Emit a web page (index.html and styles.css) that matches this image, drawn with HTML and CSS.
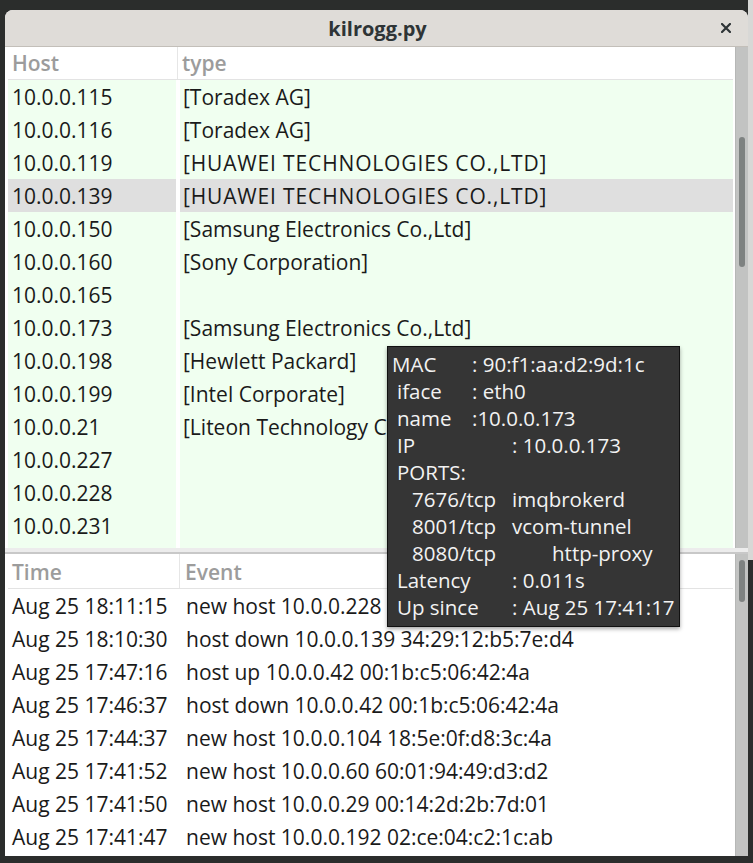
FILE: index.html
```html
<!DOCTYPE html>
<html>
<head>
<meta charset="utf-8">
<link rel="stylesheet" href="styles.css">
</head>
<body>
<div class="desk">
  <div class="window">
    <div class="titlebar">
      <span class="title">kilrogg.py</span>
      <svg class="close" width="10" height="10" viewBox="0 0 10 10"><path d="M1 1 L9 9 M9 1 L1 9" stroke="#2e3436" stroke-width="2.2" stroke-linecap="square"/></svg>
    </div>
    <div class="pane top">
      <div class="tree">
        <div class="head hosts">
          <div class="hc">Host</div>
          <div class="hc">type</div>
        </div>
        <div class="rows hosts">
          <div class="c">10.0.0.115</div><div class="c">[Toradex AG]</div>
          <div class="c">10.0.0.116</div><div class="c">[Toradex AG]</div>
          <div class="c">10.0.0.119</div><div class="c caps">[HUAWEI TECHNOLOGIES CO.,LTD]</div>
          <div class="c sel">10.0.0.139</div><div class="c sel caps">[HUAWEI TECHNOLOGIES CO.,LTD]</div>
          <div class="c">10.0.0.150</div><div class="c">[Samsung Electronics Co.,Ltd]</div>
          <div class="c">10.0.0.160</div><div class="c">[Sony Corporation]</div>
          <div class="c">10.0.0.165</div><div class="c"></div>
          <div class="c">10.0.0.173</div><div class="c">[Samsung Electronics Co.,Ltd]</div>
          <div class="c">10.0.0.198</div><div class="c">[Hewlett Packard]</div>
          <div class="c">10.0.0.199</div><div class="c">[Intel Corporate]</div>
          <div class="c">10.0.0.21</div><div class="c">[Liteon Technology Corporation]</div>
          <div class="c">10.0.0.227</div><div class="c"></div>
          <div class="c">10.0.0.228</div><div class="c"></div>
          <div class="c">10.0.0.231</div><div class="c"></div>
          <div class="c"></div><div class="c"></div>
        </div>
      </div>
      <div class="trough"><div class="slider s1"></div></div>
    </div>
    <div class="handle"></div>
    <div class="pane bottom">
      <div class="tree">
        <div class="head events">
          <div class="hc">Time</div>
          <div class="hc">Event</div>
        </div>
        <div class="rows events">
          <div class="c">Aug 25 18:11:15</div><div class="c">new host 10.0.0.228 00:1e:c0:0a:b1:3f</div>
          <div class="c">Aug 25 18:10:30</div><div class="c">host down 10.0.0.139 34:29:12:b5:7e:d4</div>
          <div class="c">Aug 25 17:47:16</div><div class="c">host up 10.0.0.42 00:1b:c5:06:42:4a</div>
          <div class="c">Aug 25 17:46:37</div><div class="c">host down 10.0.0.42 00:1b:c5:06:42:4a</div>
          <div class="c">Aug 25 17:44:37</div><div class="c">new host 10.0.0.104 18:5e:0f:d8:3c:4a</div>
          <div class="c">Aug 25 17:41:52</div><div class="c">new host 10.0.0.60 60:01:94:49:d3:d2</div>
          <div class="c">Aug 25 17:41:50</div><div class="c">new host 10.0.0.29 00:14:2d:2b:7d:01</div>
          <div class="c">Aug 25 17:41:47</div><div class="c">new host 10.0.0.192 02:ce:04:c2:1c:ab</div>
        </div>
      </div>
      <div class="trough"><div class="slider s2"></div></div>
    </div>
    <div class="tooltip">
      <div class="tl"><span class="k k0">MAC</span><span>: 90:f1:aa:d2:9d:1c</span></div>
      <div class="tl"><span class="k k1">iface</span><span>: eth0</span></div>
      <div class="tl"><span class="k k1">name</span><span>:10.0.0.173</span></div>
      <div class="tl"><span class="k k2">IP</span><span>: 10.0.0.173</span></div>
      <div class="tl"><span class="k">PORTS:</span></div>
      <div class="tl port"><span class="k k3">7676/tcp</span><span>imqbrokerd</span></div>
      <div class="tl port"><span class="k k3">8001/tcp</span><span>vcom-tunnel</span></div>
      <div class="tl port"><span class="k k4">8080/tcp</span><span>http-proxy</span></div>
      <div class="tl"><span class="k k2">Latency</span><span>: 0.011s</span></div>
      <div class="tl"><span class="k k2">Up since</span><span>: Aug 25 17:41:17</span></div>
    </div>
  </div>
</div>
</body>
</html>
```

FILE: styles.css
```css
html, body {
  margin: 0;
  padding: 0;
}
body {
  width: 753px;
  height: 863px;
  overflow: hidden;
  background: #2b2d2c;
  font-family: "Open Sans", "Noto Sans", sans-serif;
  font-size: 21px;
  color: #1a1a1a;
}
.desk {
  padding: 10px 5px 0 5px;
  background: linear-gradient(to right, transparent 748px, #d8d8d6 748px) no-repeat 0 0 / 753px 560px;
}
.window {
  position: relative;
  width: 743px;
  height: 846px;
  background: #ffffff;
  border-radius: 8px 8px 0 0;
  overflow: hidden;
  display: flex;
  flex-direction: column;
}
.titlebar {
  height: 36px;
  flex: none;
  background: #dfdcd8;
  border-bottom: 1px solid #c3bfb9;
  display: flex;
  align-items: center;
  justify-content: center;
  position: relative;
}
.title {
  font-weight: 700;
  font-size: 20px;
  color: #2e3436;
  margin-left: 2px;
}
.close {
  position: absolute;
  right: 17px;
  top: 13px;
}
.pane {
  display: flex;
  flex: none;
}
.pane.top {
  height: 501px;
}
.pane.bottom {
  height: 302px;
}
.tree {
  flex: 1;
  padding-left: 3px;
  overflow: hidden;
  margin-right: 2px;
}
.head {
  display: grid;
  border-bottom: 1px solid #e3e3e3;
  background: #fff;
}
.head.hosts {
  height: 32px;
  grid-template-columns: 169px 1fr;
}
.head.events {
  height: 34px;
  grid-template-columns: 171px 1fr;
}
.hc {
  font-weight: 600;
  font-size: 21px;
  color: #9c9c9c;
  display: flex;
  align-items: center;
  padding-left: 4px;
  border-left: 1px solid #e6e6e6;
}
.hc:first-child {
  border-left: none;
  padding-left: 4px;
}
.head.hosts .hc:nth-child(2) { padding-left: 4px; }
.head.events .hc:nth-child(2) { padding-left: 5px; padding-top: 1px; }
.head.events .hc:first-child { padding-top: 1px; }
.rows {
  display: grid;
  grid-auto-rows: 33px;
}
.rows.hosts {
  grid-template-columns: 168px 553px;
  column-gap: 4px;
}
.rows.hosts .c {
  background: #f0fff0;
}
.rows.hosts .c.sel {
  background: #dfdfdf;
}
.rows.events {
  grid-template-columns: 174px 1fr;
}
.c {
  display: flex;
  align-items: center;
  padding-left: 4px;
  white-space: nowrap;
  overflow: hidden;
}
.c.caps {
  letter-spacing: 0.85px;
}
.rows.hosts .c:nth-child(2n) { padding-left: 3px; }
.rows.events .c:nth-child(2n) { padding-left: 4px; }
.trough {
  width: 13px;
  flex: none;
  background: #c2c3c2;
  border-left: 1px solid #b6b7b6;
  box-sizing: border-box;
  position: relative;
}
.slider {
  position: absolute;
  left: 3px;
  width: 6px;
  border-radius: 3px;
  background: #7e8281;
}
.s1 { top: 90px; height: 130px; }
.s2 { top: 6px; height: 42px; }
.handle {
  height: 6px;
  flex: none;
  background: #ececec;
  border-bottom: 2px solid #c8c8c8;
  box-sizing: border-box;
}
.tooltip {
  position: absolute;
  left: 382px;
  top: 336px;
  width: 291px;
  height: 275px;
  background: #353535;
  border: 1px solid #111;
  box-shadow: 0 2px 4px rgba(0,0,0,0.35);
  color: #f2f2f2;
  padding-top: 4px;
  font-size: 20.5px;
  box-sizing: content-box;
}
.tl {
  height: 27px;
  line-height: 27px;
  display: flex;
  white-space: nowrap;
  padding-left: 9px;
}
.tl:first-child { padding-left: 4px; }
.tl.port { padding-left: 24px; }
.k { display: inline-block; }
.k0 { width: 80px; }
.k1 { width: 75px; }
.k2 { width: 115px; }
.k3 { width: 100px; }
.k4 { width: 140px; }
```
